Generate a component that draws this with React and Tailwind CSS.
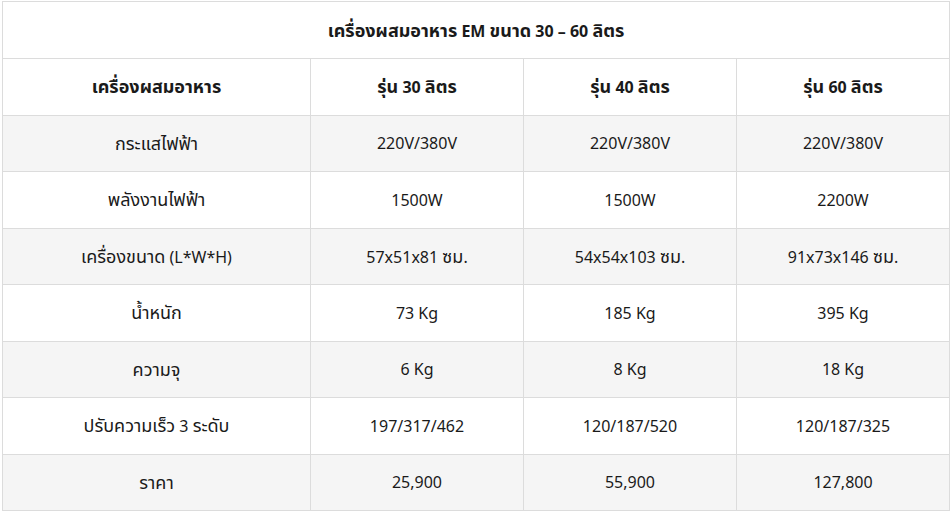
const columns = ["เครื่องผสมอาหาร", "รุ่น 30 ลิตร", "รุ่น 40 ลิตร", "รุ่น 60 ลิตร"];

const rows = [
  ["กระแสไฟฟ้า", "220V/380V", "220V/380V", "220V/380V"],
  ["พลังงานไฟฟ้า", "1500W", "1500W", "2200W"],
  ["เครื่องขนาด (L*W*H)", "57x51x81 ซม.", "54x54x103 ซม.", "91x73x146 ซม."],
  ["น้ำหนัก", "73 Kg", "185 Kg", "395 Kg"],
  ["ความจุ", "6 Kg", "8 Kg", "18 Kg"],
  ["ปรับความเร็ว 3 ระดับ", "197/317/462", "120/187/520", "120/187/325"],
  ["ราคา", "25,900", "55,900", "127,800"],
];

// Thai glyphs in the source render larger than the latin ones, so give them their own size
function Text({ value }) {
  return value.split(/([\u0E00-\u0E7F]+)/).map((part, i) =>
    /[\u0E00-\u0E7F]/.test(part) ? (
      <span key={i} className="text-[18px]">
        {part}
      </span>
    ) : (
      part
    )
  );
}

export default function App() {
  return (
    <div className="bg-white min-h-[512px] pt-px pl-[2px] font-['Noto_Sans','Noto_Sans_Thai',sans-serif] text-[16px] leading-6 text-[#1a1a1a]">
      <table className="w-[947px] border-collapse table-fixed text-center">
        <colgroup>
          <col className="w-[308px]" />
          <col className="w-[213px]" />
          <col className="w-[213px]" />
          <col className="w-[213px]" />
        </colgroup>
        <thead>
          <tr className="h-[57px]">
            <th colSpan={4} className="border border-[#dcdcdc] font-bold">
              <Text value="เครื่องผสมอาหาร EM ขนาด 30 – 60 ลิตร" />
            </th>
          </tr>
          <tr className="h-[56.5px]">
            {columns.map((c) => (
              <th key={c} className="border border-[#dcdcdc] font-bold">
                <Text value={c} />
              </th>
            ))}
          </tr>
        </thead>
        <tbody>
          {rows.map((row, i) => (
            <tr key={row[0]} className={`h-[56.5px] ${i % 2 === 0 ? "bg-[#f5f5f5]" : "bg-white"}`}>
              {row.map((cell, j) => (
                <td key={j} className="border border-[#dcdcdc] font-normal">
                  <Text value={cell} />
                </td>
              ))}
            </tr>
          ))}
        </tbody>
      </table>
    </div>
  );
}
